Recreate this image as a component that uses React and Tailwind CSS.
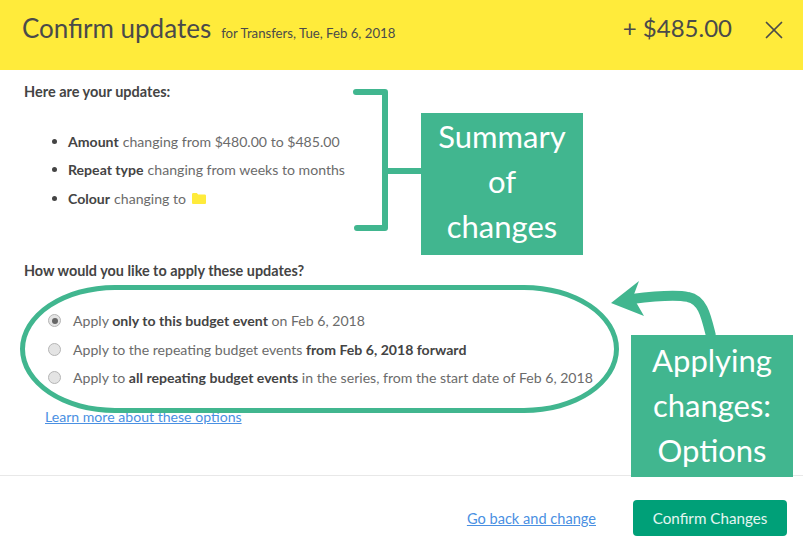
import { X } from "lucide-react";

const font = { fontFamily: "Lato, 'Open Sans', sans-serif" };

function Bullet({ label, children }) {
  return (
    <li className="flex items-center h-[28.5px]">
      <span className="w-[5px] h-[5px] mr-[11px] ml-[52px] rounded-full bg-[#444] shrink-0"></span>
      <b className="font-bold text-[#444] mr-1">{label}</b>
      <span>{children}</span>
    </li>
  );
}

function Radio({ checked, children }) {
  return (
    <label className="flex items-center h-[28.5px]">
      <span className="w-[13px] h-[13px] ml-[48px] mr-[12px] rounded-full border border-[#b5b5b5] bg-[#e4e4e4] flex items-center justify-center shrink-0">
        {checked && <span className="w-[6px] h-[6px] rounded-full bg-[#666]"></span>}
      </span>
      <span className="whitespace-pre">{children}</span>
    </label>
  );
}

export default function App() {
  return (
    <div className="relative w-[803px] h-[556px] bg-white overflow-hidden text-[14.1px] text-[#6b6b6b]" style={font}>
      <header className="h-[70px] bg-[#ffeb3b] flex items-start text-[#4a4a4a]">
        <h1 className="ml-[22px] mt-[11px] text-[26px] leading-[34px]">Confirm updates</h1>
        <span className="ml-[10px] mt-[24px] text-[13.2px] leading-[18px]">for Transfers, Tue, Feb 6, 2018</span>
        <span className="ml-auto mt-[12px] text-[24px] leading-[32px]">+ $485.00</span>
        <X className="ml-[27px] mr-[14px] mt-[15px] w-[30px] h-[30px]" strokeWidth={1.4} />
      </header>

      <main className="pl-6">
        <p className="mt-[13px] font-bold text-[14.5px] text-[#444] leading-[18px]">Here are your updates:</p>
        <ul className="mt-[26px] -ml-6">
          <Bullet label="Amount">changing from $480.00 to $485.00</Bullet>
          <Bullet label="Repeat type">changing from weeks to months</Bullet>
          <Bullet label="Colour">
            <span className="inline-flex items-center gap-1">
              changing to
              <svg width="14" height="11" viewBox="0 0 14 11" className="ml-0.5">
                <path d="M0 1.5C0 .7.5 0 1.300 0h3.500l1.400 1.500h6.500c.8 0 1.300.6 1.300 1.300v6.900c0 .7-.5 1.300-1.300 1.300H1.300C.5 11 0 10.400 0 9.700z" fill="#ffeb3b" />
              </svg>
            </span>
          </Bullet>
        </ul>
        <p className="mt-[49px] font-bold text-[14.4px] text-[#444] leading-[18px]">How would you like to apply these updates?</p>
        <div className="mt-[27px] -ml-6">
          <Radio checked>Apply <b className="font-bold text-[#444]">only to this budget event</b> on Feb 6, 2018</Radio>
          <Radio>Apply to the repeating budget events <b className="font-bold text-[#444]">from Feb 6, 2018 forward</b></Radio>
          <Radio>Apply to <b className="font-bold text-[#444]">all repeating budget events</b> in the series, from the start date of Feb 6, 2018</Radio>
        </div>
        <a className="block ml-[21px] mt-[16px] text-[#4a90e2] underline leading-[18px]">Learn more about these options</a>
      </main>

      <footer className="absolute left-0 right-0 top-[475px] h-[81px] border-t border-[#e8e8e8] flex items-start justify-end pr-4 pt-6">
        <a className="mt-[10px] mr-[37px] text-[14.6px] text-[#4a90e2] underline leading-[18px]">Go back and change</a>
        <button className="w-[154px] h-9 rounded-sm bg-[#00a078] text-[15.2px] text-white/90">Confirm Changes</button>
      </footer>

      {/* annotations over the page */}
      <div className="absolute left-[20px] top-[285px] w-[599px] h-[128px] rounded-[95px/64px] border-[5px] border-[#41b68f]"></div>
      <svg className="absolute left-0 top-0 pointer-events-none" width="803" height="556" fill="none" stroke="#41b68f">
        <path d="M356 92H385V228H357" strokeWidth="6" strokeLinecap="round" strokeLinejoin="round" />
        <path d="M385 171H421" strokeWidth="6" />
        <path d="M711 336C706 316 703 300 688 297C675 294 655 296 632 299" strokeWidth="10" />
        <path d="M611 303L639 281L633 297L644 316Z" fill="#41b68f" stroke="none" />
      </svg>
      <div className="absolute left-[421px] top-[113px] w-[162px] h-[142px] pt-px bg-[#41b68f] text-white text-[31px] leading-[45px] text-center flex flex-col">
        <span>Summary</span>
        <span>of</span>
        <span>changes</span>
      </div>
      <div className="absolute left-[631px] top-[335px] w-[162px] h-[142px] pt-[3px] bg-[#41b68f] text-white text-[31px] leading-[45px] text-center flex flex-col">
        <span>Applying</span>
        <span>changes:</span>
        <span>Options</span>
      </div>
    </div>
  );
}
